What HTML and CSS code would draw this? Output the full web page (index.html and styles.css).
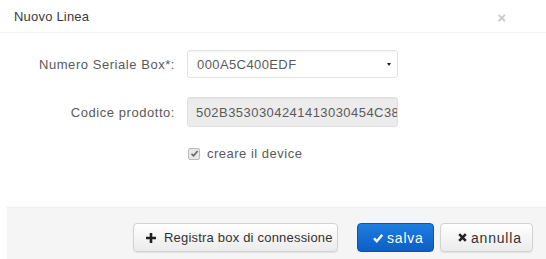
FILE: index.html
```html
<!DOCTYPE html>
<html>
<head>
<meta charset="utf-8">
<link rel="stylesheet" href="styles.css">
</head>
<body>
<div class="modal">
  <div class="modal-header">
    <span class="title">Nuovo Linea</span>
    <span class="close">×</span>
  </div>
  <div class="modal-body">
    <div class="row">
      <label class="lbl">Numero Seriale Box*:</label>
      <div class="control select">
        <span class="val">000A5C400EDF</span>
        <span class="caret"></span>
      </div>
    </div>
    <div class="row">
      <label class="lbl">Codice prodotto:</label>
      <div class="control disabled">
        <span class="val">502B3530304241413030454C38</span>
      </div>
    </div>
    <div class="row check-row">
      <span class="lbl"></span>
      <div class="check">
        <span class="box"><svg width="9" height="9" viewBox="0 0 9 9"><path d="M1.5 4.8 L3.6 6.8 L7.6 2" fill="none" stroke="#666" stroke-width="1.6"/></svg></span>
        <span class="check-text">creare il device</span>
      </div>
    </div>
  </div>
  <div class="modal-footer">
    <button class="btn btn-reg"><svg class="ico" width="12" height="12" viewBox="0 0 12 12"><path d="M6 1 V11 M1 6 H11" stroke="#222" stroke-width="2.6"/></svg><span>Registra box di connessione</span></button>
    <button class="btn btn-primary"><svg class="ico" width="10" height="10" viewBox="0 0 10 10"><path d="M1 5.4 L3.8 8.2 L9.2 1.8" fill="none" stroke="#fff" stroke-width="2.3"/></svg><span>salva</span></button>
    <button class="btn btn-cancel"><svg class="ico" width="9" height="9" viewBox="0 0 9 9"><path d="M1.2 1.2 L7.8 7.8 M7.8 1.2 L1.2 7.8" stroke="#222" stroke-width="2.6"/></svg><span>annulla</span></button>
  </div>
</div>
</body>
</html>
```
FILE: styles.css
```css
html, body {
  margin: 0;
  padding: 0;
  background: #fff;
}
body {
  font-family: "Liberation Sans", Arial, sans-serif;
  font-size: 13px;
  color: #444;
  width: 546px;
  height: 259px;
  overflow: hidden;
}
.modal {
  display: flex;
  flex-direction: column;
}
.modal-header {
  height: 33px;
  display: flex;
  align-items: center;
  justify-content: space-between;
  padding: 0 40px 0 14px;
  border-bottom: 1px solid #f4f4f4;
  box-sizing: border-box;
}
.title {
  color: #3a3a3a;
  font-size: 13px;
  padding-top: 1px;
  letter-spacing: 0.2px;
}
.close {
  color: #c8c8c8;
  font-size: 15px;
  font-weight: bold;
  margin-top: 2px;
}
.modal-body {
  padding: 17px 0 0 0;
  height: 174px;
  box-sizing: border-box;
}
.row {
  display: flex;
  align-items: center;
  margin-bottom: 19px;
}
.lbl {
  width: 175px;
  text-align: right;
  color: #5a5a5a;
  padding-right: 12px;
  letter-spacing: 0.55px;
  flex: none;
}
.control {
  width: 211px;
  height: 28px;
  border: 1px solid #e2e2e2;
  border-radius: 3px;
  display: flex;
  align-items: center;
  box-sizing: border-box;
  padding: 0 8px 0 9px;
  color: #5a5a5a;
  overflow: hidden;
  white-space: nowrap;
  box-shadow: inset 0 1px 1px rgba(0,0,0,0.04);
}
.select {
  justify-content: space-between;
  background: #fff;
}
.select .val {
  letter-spacing: 0.4px;
}
.disabled {
  height: 30px;
  background: #ececec;
  border-color: #e0e0e0;
  padding-left: 8px;
}
.disabled .val {
  letter-spacing: 0.45px;
}
.caret {
  width: 0;
  height: 0;
  border-left: 2.5px solid transparent;
  border-right: 2.5px solid transparent;
  border-top: 3px solid #222;
  margin-right: -2px;
}
.check-row {
  margin-top: 11px;
}
.check {
  display: flex;
  align-items: center;
  gap: 7px;
  margin-left: 1px;
}
.box {
  width: 10px;
  height: 10px;
  border: 1px solid #bbb;
  border-radius: 2px;
  background: #e8e8e8;
  display: flex;
  align-items: center;
  justify-content: center;
}
.check-text {
  color: #5a5a5a;
  letter-spacing: 0.5px;
}
.modal-footer {
  margin-left: 7px;
  background: #f5f5f5;
  border-top: 1px solid #ececec;
  height: 52px;
  box-sizing: border-box;
  display: flex;
  justify-content: flex-end;
  align-items: flex-start;
  padding: 15px 13px 0 0;
}
.btn {
  font-family: "Liberation Sans", Arial, sans-serif;
  font-size: 13px;
  height: 29px;
  border-radius: 4px;
  display: flex;
  align-items: center;
  box-sizing: border-box;
  white-space: nowrap;
  cursor: pointer;
  padding: 0;
}
.ico {
  flex: none;
}
.btn-reg, .btn-cancel {
  background: linear-gradient(#ffffff, #ebebeb);
  border: 1px solid #d2d2d2;
  color: #333;
  box-shadow: 0 1px 1px rgba(0,0,0,0.08);
}
.btn-reg {
  width: 205px;
  padding-left: 11px;
  gap: 7px;
  margin-right: 19px;
  letter-spacing: 0.2px;
}
.btn-primary {
  width: 77px;
  padding-left: 15px;
  gap: 4px;
  background: linear-gradient(#1e7ee0, #0c5ec7);
  border: 1px solid #0a54b4;
  color: #fff;
  margin-right: 6px;
  font-size: 14px;
  letter-spacing: 0.8px;
}
.btn-cancel {
  width: 93px;
  padding-left: 17px;
  gap: 4px;
  font-size: 14px;
  letter-spacing: 0.8px;
}
```
